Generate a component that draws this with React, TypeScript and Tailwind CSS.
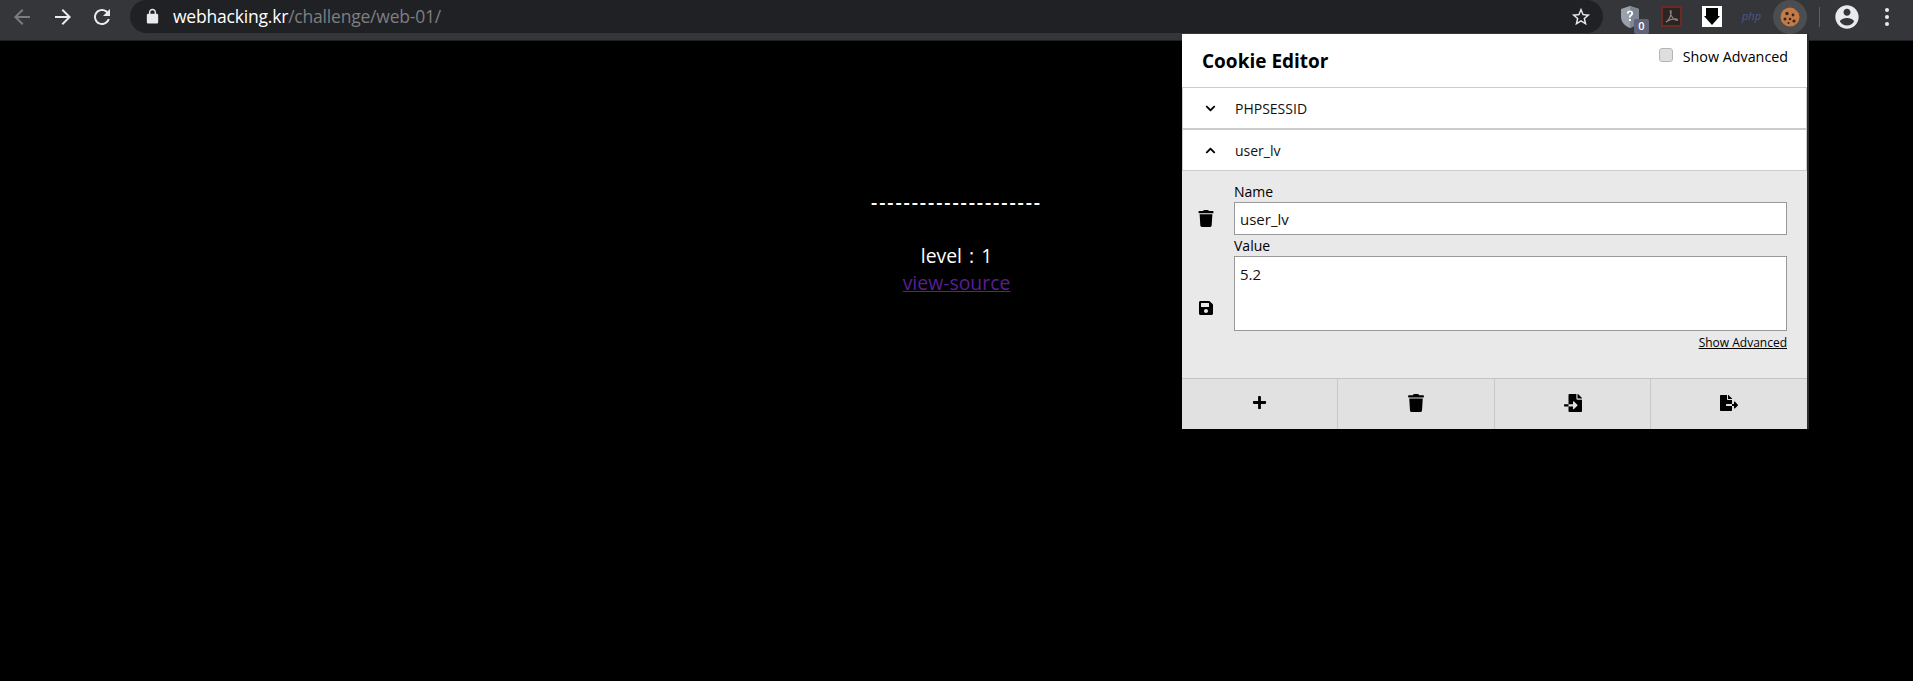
import { FaChevronDown, FaChevronUp, FaFileExport, FaFileImport, FaPlus, FaSave, FaTrash } from "react-icons/fa";

const sans = "font-['Open_Sans','Noto_Sans',sans-serif]";

function Toolbar() {
  return (
    <div className="flex h-[41px] items-start border-b border-[#202124] bg-[#35363a]">
      {/* Nav buttons */}
      <div className="flex h-[33px] w-[130px] items-center pl-[10px]">
        <svg viewBox="0 0 24 24" className="h-[24px] w-[24px] fill-[#7b7c7f]">
          <path d="M20 11H7.83l5.59-5.59L12 4l-8 8 8 8 1.41-1.41L7.83 13H20v-2z" />
        </svg>
        <svg viewBox="0 0 24 24" className="ml-[17px] h-[24px] w-[24px] fill-[#e8eaed]">
          <path d="M12 4l-1.41 1.41L16.17 11H4v2h12.17l-5.58 5.59L12 20l8-8z" />
        </svg>
        <svg viewBox="0 0 24 24" className="ml-[15px] h-[24px] w-[24px] fill-[#e8eaed]">
          <path d="M17.65 6.35C16.2 4.9 14.21 4 12 4c-4.42 0-7.99 3.58-7.99 8s3.57 8 7.99 8c3.73 0 6.84-2.55 7.73-6h-2.08c-.82 2.33-3.04 4-5.65 4-3.31 0-6-2.69-6-6s2.69-6 6-6c1.66 0 3.14.69 4.22 1.78L13 11h7V4l-2.35 2.35z" />
        </svg>
      </div>

      {/* Address bar */}
      <div className="flex h-[33px] w-[1473px] items-center rounded-[17px] bg-[#202124] pl-[14px] pr-[11px]">
        <svg viewBox="0 0 24 24" className="h-[17px] w-[17px] fill-[#e8eaed]">
          <path d="M18 8h-1V6c0-2.76-2.24-5-5-5S7 3.24 7 6v2H6c-1.1 0-2 .9-2 2v10c0 1.1.9 2 2 2h12c1.1 0 2-.9 2-2V10c0-1.1-.9-2-2-2zm-3 0H9V6c0-1.65 1.35-3 3-3s3 1.35 3 3v2z" />
        </svg>
        <span className={`ml-[12px] text-[17.5px] tracking-[-0.2px] ${sans}`}>
          <span className="text-white">webhacking.kr</span>
          <span className="text-[#7d7f82]">/challenge/web-01/</span>
        </span>
        <svg viewBox="0 0 24 24" className="ml-auto h-[22px] w-[22px] fill-[#e8eaed]">
          <path d="M22 9.24l-7.19-.62L12 2 9.19 8.63 2 9.24l5.46 4.73L5.82 21 12 17.27 18.18 21l-1.63-7.03L22 9.24zM12 15.4l-3.76 2.27 1-4.28-3.32-2.88 4.38-.38L12 6.1l1.71 4.04 4.38.38-3.32 2.88 1 4.28L12 15.4z" />
        </svg>
      </div>

      {/* Extensions */}
      <div className="flex h-[33px] flex-1 items-center">
        <div className="relative ml-[17px] h-[22px] w-[20px]">
          <svg viewBox="0 0 20 22" className="h-[22px] w-[20px]">
            <path d="M10 0l9 3v8c0 5-4 9-9 11-5-2-9-6-9-11V3z" fill="#9aa0ac" />
            <path d="M10 0l9 3v8c0 5-4 9-9 11z" fill="#7f8592" />
            <path d="M6.8 7.5C6.8 5.6 8.2 4.5 10 4.5s3.2 1 3.2 2.7c0 2.4-2.4 2.4-2.4 4.3H9c0-2.9 2.2-2.8 2.2-4.3 0-.7-.5-1.1-1.2-1.1s-1.2.5-1.2 1.4zM9 13h1.9v2H9z" fill="#fff" />
          </svg>
          <span className={`absolute left-[14px] top-[13px] flex h-[15px] w-[15px] items-center justify-center rounded-[2px] bg-[#5f6479] text-[11px] font-semibold text-white ${sans}`}>0</span>
        </div>
        <div className="ml-[21px] flex h-[21px] w-[21px] items-center justify-center border-2 border-[#6b2a24] bg-[#2b2422]">
          <svg viewBox="0 0 16 16" className="h-[15px] w-[15px] fill-none stroke-[#85807e] stroke-[1.4]">
            <path d="M2 14c2-1 4-4 5-7 .5-2 .8-5 .2-5.2-.7-.2-.6 3 1 6s3.600 4.200 5.800 4.200c1 0 .5-1.400-2-1.400-2.500 0-6 1-8 2.200" />
          </svg>
        </div>
        <div className="ml-[20px] flex h-[21px] w-[20px] items-center justify-center bg-white">
          <svg viewBox="0 0 20 21" className="h-[21px] w-[20px] fill-black">
            <path d="M4 2h12v8h2l-8 9-8-9h2z" />
          </svg>
        </div>
        <span className={`ml-[20px] w-[20px] text-[11px] font-medium italic text-[#4a5690] ${sans}`}>php</span>
        <div className="ml-[11px] flex h-[34px] w-[34px] items-center justify-center rounded-full bg-[#4c4d50]">
          <svg viewBox="0 0 20 20" className="h-[20px] w-[20px]">
            <circle cx="10" cy="10" r="9.500" fill="#c47a45" />
            <path d="M14 0c0 2 1 3 2.500 3 0 1.500 1 2.500 3.500 2.500V0z" fill="#4c4d50" />
            <circle cx="7" cy="6.500" r="1.700" fill="#33261f" />
            <circle cx="13" cy="8" r="1.400" fill="#33261f" />
            <circle cx="5" cy="12" r="1.500" fill="#33261f" />
            <circle cx="10" cy="12" r="1.300" fill="#33261f" />
            <circle cx="14" cy="14" r="1.600" fill="#33261f" />
            <circle cx="8.500" cy="16" r="1.100" fill="#33261f" />
          </svg>
        </div>
        <div className="ml-[12px] h-[20px] w-px bg-[#5f6063]" />
        <svg viewBox="0 0 24 24" className="ml-[13px] h-[28px] w-[28px] fill-[#e8eaed]">
          <path d="M12 2C6.480 2 2 6.480 2 12s4.480 10 10 10 10-4.480 10-10S17.520 2 12 2zm0 3c1.660 0 3 1.340 3 3s-1.340 3-3 3-3-1.340-3-3 1.340-3 3-3zm0 14.200c-2.500 0-4.710-1.280-6-3.220.030-1.990 4-3.080 6-3.080 1.990 0 5.970 1.090 6 3.080-1.290 1.940-3.500 3.220-6 3.220z" />
        </svg>
        <div className="ml-[24px] flex flex-col gap-[3px]">
          <span className="h-[4px] w-[4px] rounded-full bg-[#e8eaed]" />
          <span className="h-[4px] w-[4px] rounded-full bg-[#e8eaed]" />
          <span className="h-[4px] w-[4px] rounded-full bg-[#e8eaed]" />
        </div>
      </div>
    </div>
  );
}

function CookieRow({ name, open }: { name: string; open?: boolean }) {
  const Icon = open ? FaChevronUp : FaChevronDown;
  return (
    <div className="flex h-[42px] items-center border border-[#cccccc] bg-white pl-[22px]">
      <Icon className="h-[11px] w-[11px] text-black" />
      <span className="ml-[19px] text-[14px] text-[#111]">{name}</span>
    </div>
  );
}

function CookieEditor() {
  return (
    <div className={`absolute left-[1182px] top-[34px] w-[627px] border-r-2 border-[#2c2c2c] bg-white text-black ${sans}`}>
      {/* Header */}
      <div className="flex h-[53px] items-start justify-between pl-[20px] pr-[19px]">
        <h1 className="mt-[12px] text-[19px] leading-[30px] font-bold">Cookie Editor</h1>
        <label className="mt-[13px] flex items-center gap-[10px] text-[14.3px] leading-[20px]">
          <span className="-mt-[4px] h-[14px] w-[14px] rounded-[3px] border border-[#b5b5b5] bg-[#dedede]" />
          Show Advanced
        </label>
      </div>

      <CookieRow name="PHPSESSID" />
      <CookieRow name="user_lv" open />

      {/* Expanded cookie */}
      <div className="flex h-[207px] bg-[#e9e9e9] pr-[20px]">
        <div className="flex w-[52px] shrink-0 flex-col items-center pr-[4px] pt-[39px]">
          <FaTrash className="h-[17px] w-[16px]" />
          <FaSave className="mt-[73px] h-[16px] w-[16px]" />
        </div>
        <div className="flex-1 pt-[11px] text-[14px]">
          <div className="h-[20px] leading-[20px]">Name</div>
          <div className="flex h-[33px] items-center border border-[#999] bg-white px-[5px] pt-[1px] text-[15px] text-[#111]">user_lv</div>
          <div className="mt-[1px] h-[20px] leading-[20px]">Value</div>
          <div className="h-[75px] border border-[#999] bg-white px-[5px] pt-[7px] text-[15px] leading-[20px] text-[#111]">5.2</div>
          <div className="mt-[4px] text-right text-[12px] leading-[16px] underline">Show Advanced</div>
        </div>
      </div>

      {/* Footer buttons */}
      <div className="grid h-[51px] grid-cols-4 border-t border-[#c4c4c4] bg-[#e1e1e1]">
        <div className="flex items-center justify-center border-r border-[#c8c8c8] pb-[3px]">
          <FaPlus className="h-[15px] w-[15px]" />
        </div>
        <div className="flex items-center justify-center border-r border-[#c8c8c8] pb-[3px]">
          <FaTrash className="h-[18px] w-[16px]" />
        </div>
        <div className="flex items-center justify-center border-r border-[#c8c8c8] pb-[3px] pl-[2px]">
          <FaFileImport className="h-[18px] w-[18px]" />
        </div>
        <div className="flex items-center justify-center pb-[3px]">
          <FaFileExport className="h-[18px] w-[18px]" />
        </div>
      </div>
    </div>
  );
}

export default function App() {
  return (
    <div className="relative h-screen overflow-hidden bg-black">
      <Toolbar />
      <main className={`flex flex-col items-center pt-[147px] text-[19.4px] text-white ${sans}`}>
        <div className="h-[27px] font-semibold tracking-[1.9px] leading-[27px]">---------------------</div>
        <div className="mt-[27px] h-[27px] font-medium leading-[27px] [word-spacing:2px]">level : 1</div>
        <a href="#" className="h-[27px] leading-[27px] text-[#5a1d96] underline">view-source</a>
      </main>
      <CookieEditor />
    </div>
  );
}
